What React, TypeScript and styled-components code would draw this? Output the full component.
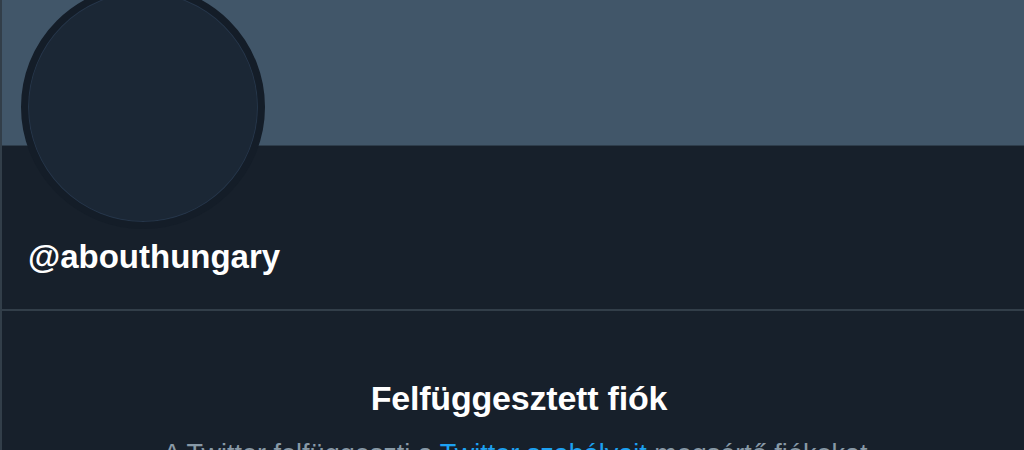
import React from "react";
import styled, { createGlobalStyle } from "styled-components";

const Global = createGlobalStyle`
  html, body { margin: 0; padding: 0; background: #17202b; overflow: hidden; }
  body { font-family: "Liberation Sans", Arial, sans-serif; }
`;

const Column = styled.main`
  width: 1034px;
  min-height: 450px;
  border-left: 2px solid #323e49;
  background: #17202b;
  display: flex;
  flex-direction: column;
`;

const Banner = styled.div`
  height: 145px;
  background: #415669;
  border-bottom: 1px solid #2e3d4b;
`;

const ProfileHead = styled.section`
  display: flex;
  flex-direction: column;
  padding: 0 0 0 19px;
  border-bottom: 2px solid #323e49;
  height: 163px;
`;

const Avatar = styled.div`
  width: 230px;
  height: 230px;
  margin-top: -161px;
  border-radius: 50%;
  background: #1b2735;
  border: 7px solid #141d28;
  box-shadow: inset 0 0 0 1px #26364a;
`;

const Handle = styled.h1`
  margin: 8px 0 0 7px;
  font-size: 33px;
  line-height: 40px;
  font-weight: 700;
  color: #ffffff;
`;

const Notice = styled.section`
  display: flex;
  flex-direction: column;
  align-items: center;
  padding-top: 67px;
`;

const Title = styled.h2`
  margin: 0;
  font-size: 34px;
  line-height: 40px;
  font-weight: 700;
  color: #ffffff;
  letter-spacing: -0.2px;
`;

const Body = styled.p`
  margin: 19px 0 0;
  font-size: 27px;
  line-height: 34px;
  color: #8899a6;
`;

const Link = styled.a`
  color: #1da1f2;
  text-decoration: none;
`;

export default function App() {
  return (
    <>
      <Global />
      <Column>
        <Banner />
        <ProfileHead>
          <Avatar />
          <Handle>@abouthungary</Handle>
        </ProfileHead>
        <Notice>
          <Title>Felfüggesztett fiók</Title>
          <Body>
            A Twitter felfüggeszti a <Link href="#">Twitter szabályait</Link> megsértő fiókokat.
          </Body>
        </Notice>
      </Column>
    </>
  );
}
